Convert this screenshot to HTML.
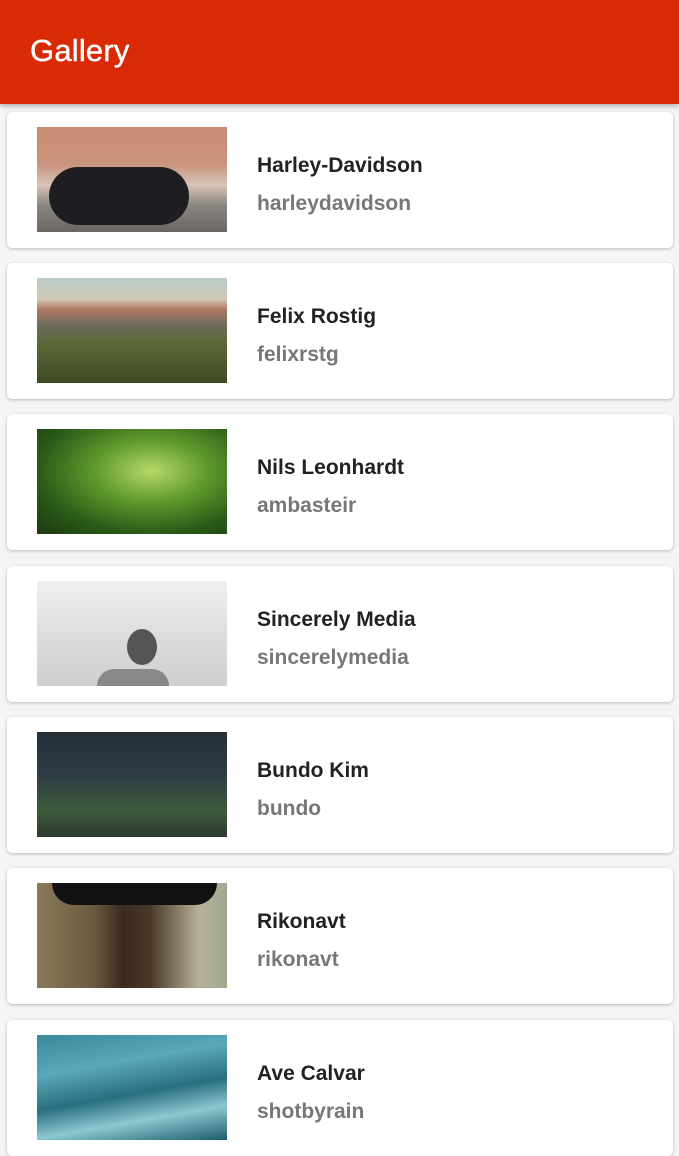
<!DOCTYPE html>
<html><head><meta charset="utf-8"><style>
body{margin:0;width:679px;height:1154px;overflow:hidden;background:#f5f5f5;font-family:"Liberation Sans",sans-serif;position:relative}
.bar{position:absolute;left:0;top:0;width:679px;height:104px;background:#d92a05;box-shadow:0 2px 5px rgba(0,0,0,.3);z-index:2}
.bar span{position:absolute;left:30px;top:33px;color:#fff;font-size:31px;letter-spacing:.2px;-webkit-text-stroke:.4px #fff}
.card{position:absolute;left:7px;width:666px;height:136px;background:#fff;border-radius:5px;box-shadow:0 1px 3px rgba(0,0,0,.25)}
.img{position:absolute;left:30px;top:15px;width:190px;height:105px}
.t{position:absolute;left:250px;top:42px;font-size:21px;font-weight:bold;color:#222}
.s{position:absolute;left:250px;top:80px;font-size:21px;font-weight:bold;color:#777}
</style></head><body>
<div class="bar"><span>Gallery</span></div>
<div class="card" style="top:112px"><div class="img" style="background:linear-gradient(180deg,#c98d74 0,#c9937c 35%,#d8c4b8 55%,#8a8580 75%,#6a6662 100%)"><div style="position:absolute;left:12px;top:40px;width:140px;height:58px;border-radius:30px;background:#1e1e22"></div></div><div class="t">Harley-Davidson</div><div class="s">harleydavidson</div></div>
<div class="card" style="top:263px"><div class="img" style="background:linear-gradient(180deg,#b9ccc8 0,#d2c9b8 20%,#b07a62 30%,#6e6a5e 45%,#5d6a3a 60%,#3e4a22 100%)"></div><div class="t">Felix Rostig</div><div class="s">felixrstg</div></div>
<div class="card" style="top:414px"><div class="img" style="background:radial-gradient(ellipse at 60% 40%,#b8d86a 0,#5f9a2c 35%,#2a5a18 70%,#1c3a10 100%)"></div><div class="t">Nils Leonhardt</div><div class="s">ambasteir</div></div>
<div class="card" style="top:566px"><div class="img" style="background:linear-gradient(180deg,#f0f0f0 0,#dadada 60%,#cfcfcf 100%)"><div style="position:absolute;left:90px;top:48px;width:30px;height:36px;border-radius:50%;background:#555"></div><div style="position:absolute;left:60px;top:88px;width:72px;height:17px;border-radius:20px 20px 0 0;background:#888"></div></div><div class="t">Sincerely Media</div><div class="s">sincerelymedia</div></div>
<div class="card" style="top:717px"><div class="img" style="background:linear-gradient(180deg,#24303a 0,#2e3c46 40%,#3e5a3a 75%,#2e3a30 100%)"></div><div class="t">Bundo Kim</div><div class="s">bundo</div></div>
<div class="card" style="top:868px"><div class="img" style="background:linear-gradient(90deg,#8a7a5a 0,#6a5a40 30%,#3a2a20 45%,#4a3a2a 60%,#b8b098 85%,#a0a890 100%)"><div style="position:absolute;left:15px;top:0;width:165px;height:22px;border-radius:0 0 80px 80px;background:#111"></div></div><div class="t">Rikonavt</div><div class="s">rikonavt</div></div>
<div class="card" style="top:1020px"><div class="img" style="background:linear-gradient(170deg,#3a8a9a 0,#5aa8b8 30%,#2a6e80 55%,#8cc8d0 75%,#1e5a6a 100%)"></div><div class="t">Ave Calvar</div><div class="s">shotbyrain</div></div>
</body></html>
